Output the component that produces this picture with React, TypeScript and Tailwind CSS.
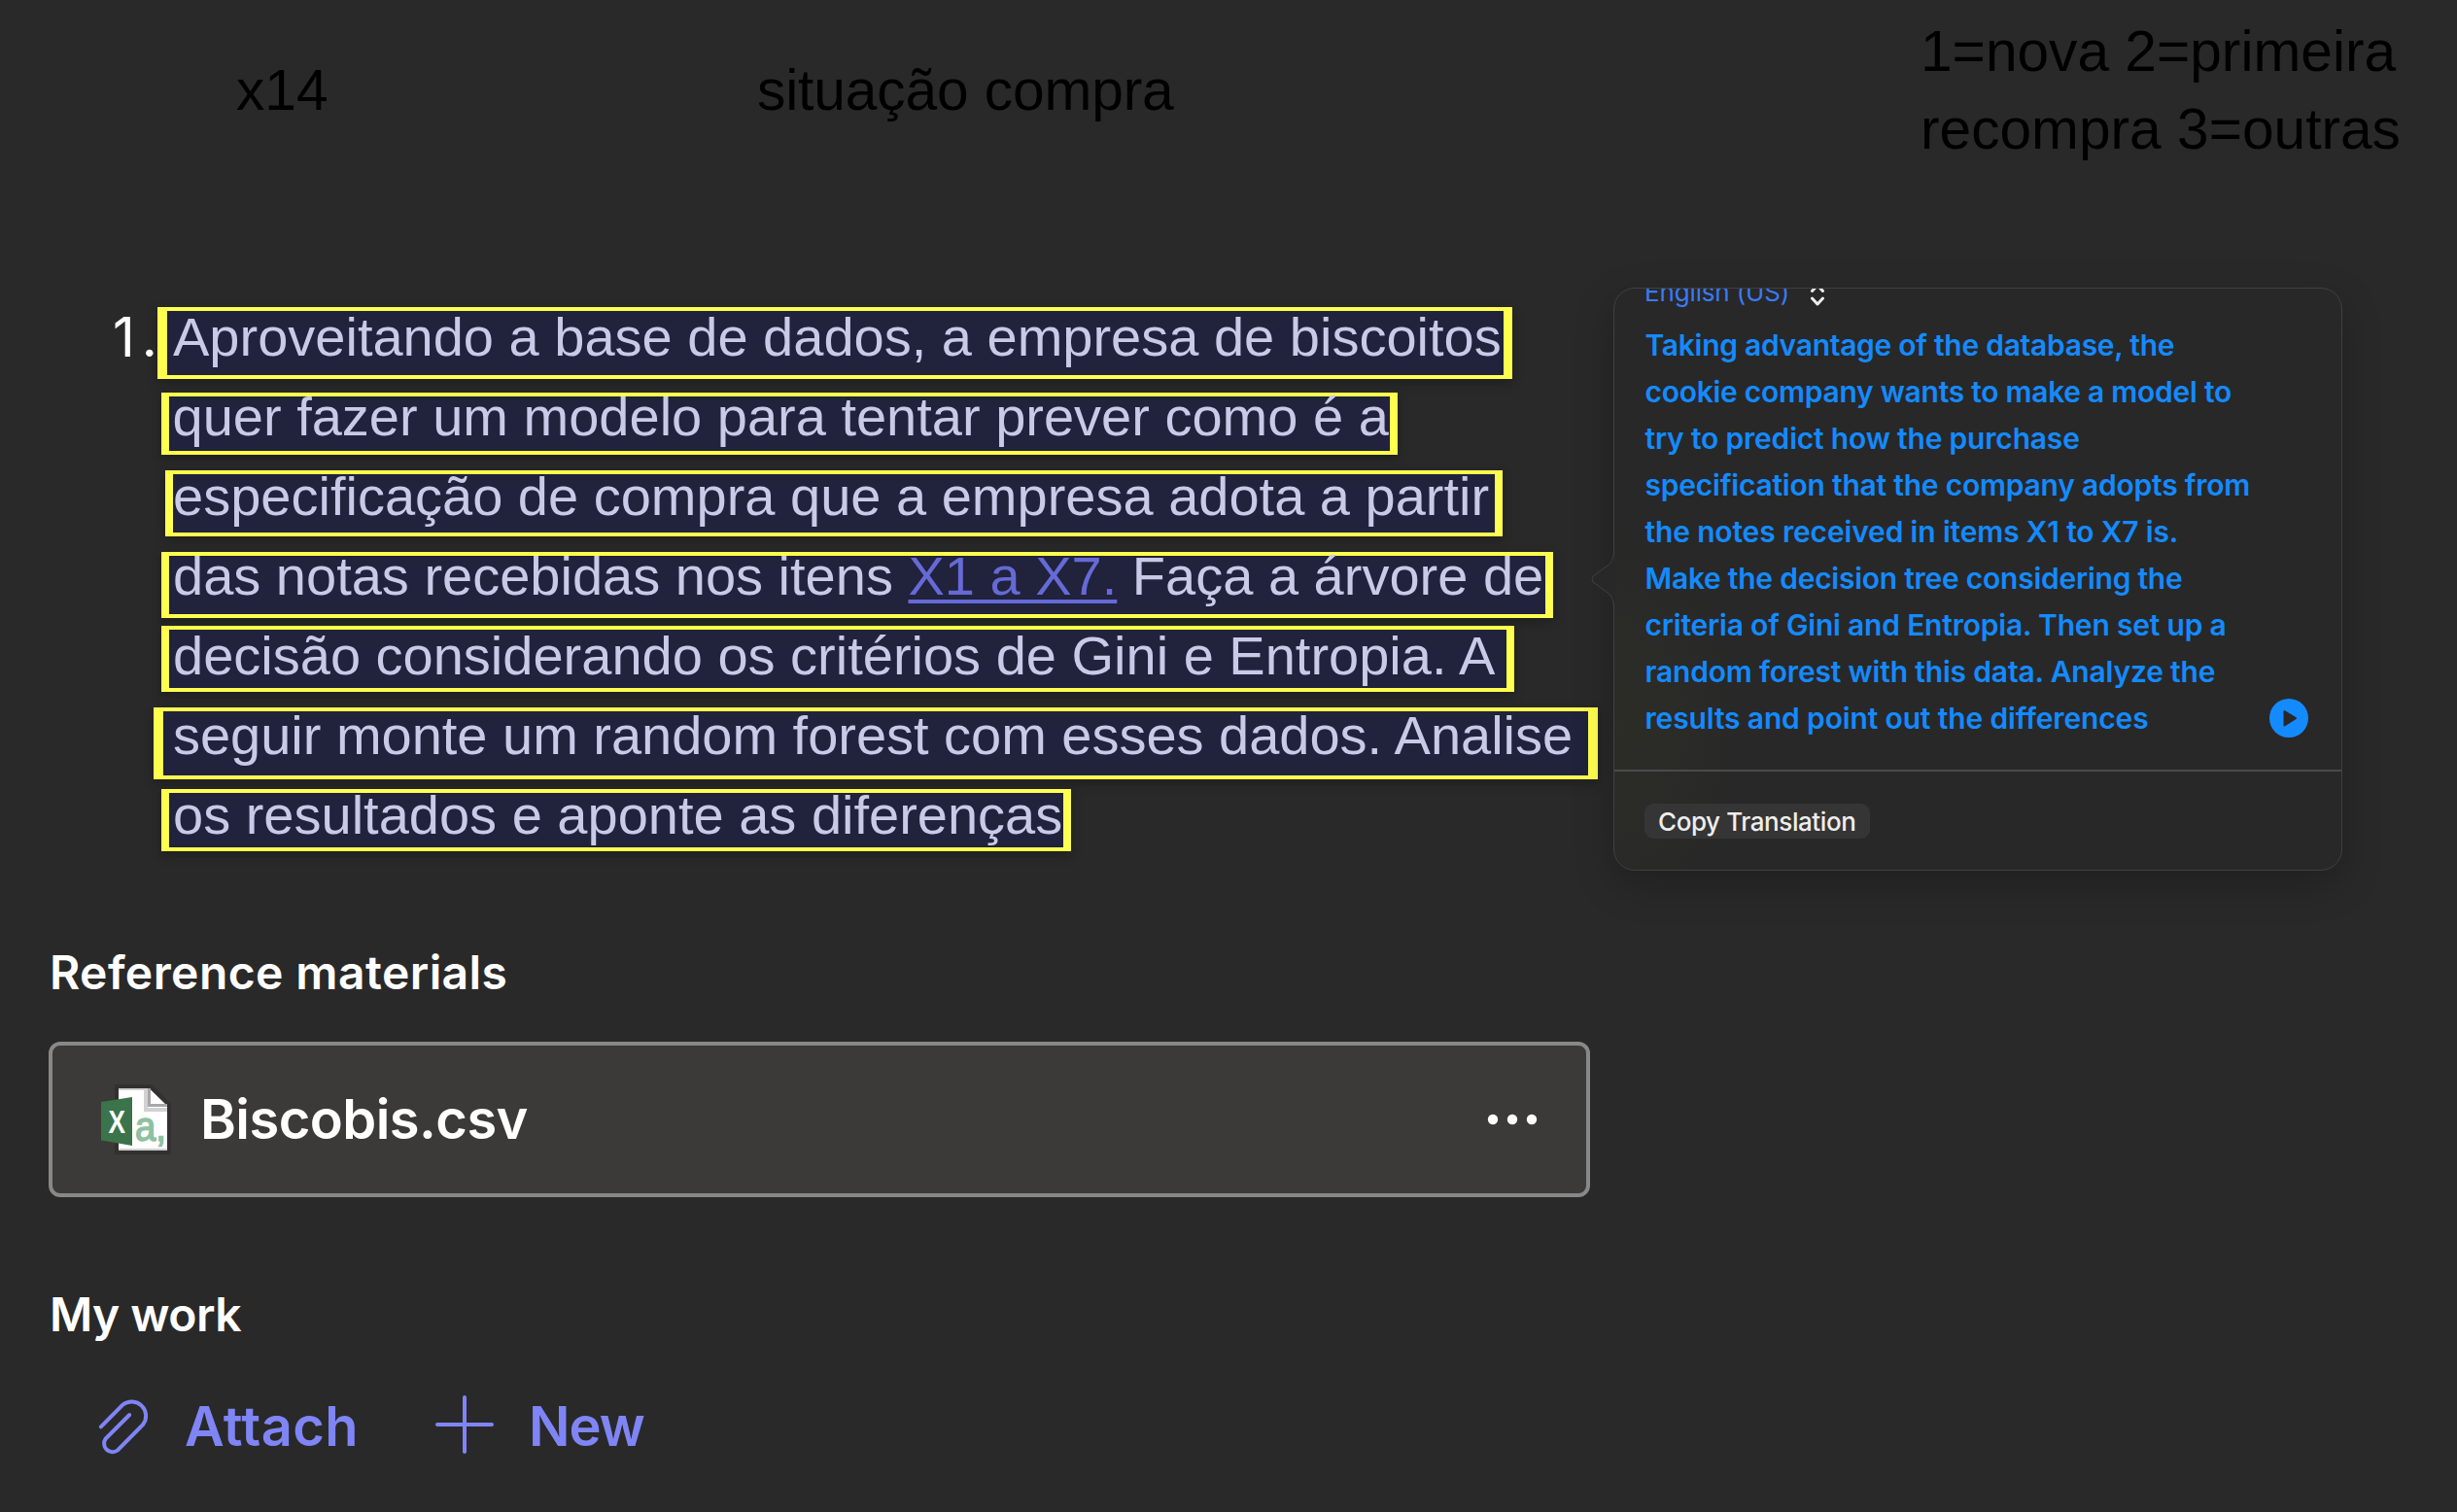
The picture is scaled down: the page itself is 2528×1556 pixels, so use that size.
import React from "react";

/* Selected source lines, each one outlined by its own detection frame. */
const sourceLines: { text: React.ReactNode; box: string }[] = [
  {
    text: "Aproveitando a base de dados, a empresa de biscoitos",
    box: "ml-1 h-[74px] w-[1394px] border-l-[10px] border-r-[9px] pl-1.5 pt-[7px]",
  },
  {
    text: "quer fazer um modelo para tentar prever como é a",
    box: "ml-2 mt-3.5 h-16 w-[1272px] border-x-8 pl-[3.5px] pt-px",
  },
  {
    text: "especificação de compra que a empresa adota a partir",
    box: "ml-3 mt-4 h-[68px] w-[1376px] border-x-8 pt-[3px]",
  },
  {
    text: (
      <>
        das notas recebidas nos itens{" "}
        <a className="text-[#656ad6] underline decoration-4 underline-offset-[5px] [text-decoration-skip-ink:none]">
          X1 a X7.
        </a>{" "}
        Faça a árvore de
      </>
    ),
    box: "ml-2 mt-4 h-[68px] w-[1432px] border-x-8 pl-1 pt-px",
  },
  {
    text: "decisão considerando os critérios de Gini e Entropia. A",
    box: "ml-2 mt-2 h-[68px] w-[1392px] border-x-8 pl-1 pt-[7px]",
  },
  {
    text: "seguir monte um random forest com esses dados. Analise",
    box: "mt-4 h-[74px] w-[1486px] border-x-[10px] pl-2.5 pt-[5px] tracking-[-0.02px]",
  },
  {
    text: "os resultados e aponte as diferenças",
    box: "ml-2 mt-2.5 h-16 w-[936px] border-x-8 pl-1 pt-[3px]",
  },
];

const translation = [
  { text: "Taking advantage of the database, the", cls: "tracking-[-0.28px]" },
  { text: "cookie company wants to make a model to", cls: "tracking-[-0.27px]" },
  { text: "try to predict how the purchase", cls: "tracking-[-0.19px]" },
  { text: "specification that the company adopts from", cls: "tracking-[-0.22px]" },
  { text: "the notes received in items X1 to X7 is.", cls: "tracking-[-0.16px]" },
  { text: "Make the decision tree considering the", cls: "tracking-[-0.25px]" },
  { text: "criteria of Gini and Entropia. Then set up a", cls: "tracking-[-0.2px]" },
  { text: "random forest with this data. Analyze the", cls: "tracking-[-0.18px]" },
  { text: "results and point out the differences", cls: "tracking-[-0.15px]" },
];

function CsvIcon() {
  return (
    <svg width="72" height="72" viewBox="0 0 72 72" className="shrink-0">
      <path d="M14 0H52L72 20V72H14Z" fill="#323031" />
      <path d="M18 4H49.5L68 22V68H18Z" fill="#fff" />
      <path d="M18 5H50M18 67H68" stroke="#d0d0d0" strokeWidth="2" />
      <path d="M46 4V26H68" fill="none" stroke="#d2d2d2" strokeWidth="4" />
      <path d="M49.5 4V21.5H68" fill="none" stroke="#a8a8a8" strokeWidth="3" />
      <text
        x="35"
        y="58"
        fontFamily="Liberation Sans"
        fontSize="42"
        fill="#8fc0a1"
        stroke="#8fc0a1"
        strokeWidth="1.500"
        textLength="32"
        lengthAdjust="spacingAndGlyphs"
      >
        a,
      </text>
      <path d="M0 18L32 13V63L0 57.5Z" fill="#3b734a" />
      <text
        x="7.5"
        y="50"
        fontFamily="Liberation Sans"
        fontSize="33"
        fontWeight="700"
        fill="#fff"
        textLength="17.5"
        lengthAdjust="spacingAndGlyphs"
      >
        X
      </text>
    </svg>
  );
}

function ClipIcon() {
  return (
    <svg width="60" height="64" viewBox="0 0 60 64" fill="none" stroke="currentColor" strokeWidth="4" strokeLinecap="round" className="shrink-0">
      <path d="M3.3 32.3L25.9 9.5A14.7 14.7 0 0 1 46.7 29.9L20.5 56.5A8.7 8.7 0 0 1 8.2 44.5L32.7 20" transform="translate(0.5 0)" />
    </svg>
  );
}

function PlusIcon() {
  return (
    <svg width="60" height="60" viewBox="0 0 60 60" stroke="currentColor" strokeWidth="4" strokeLinecap="round" className="shrink-0">
      <path d="M30 2V58M2 30H58" />
    </svg>
  );
}

function TranslationPopover() {
  return (
    <div className="absolute left-[1660px] top-[296px] h-[600px] w-[750px] rounded-[22px] border border-[#404040] bg-[#282828] bg-[radial-gradient(ellipse_130px_200px_at_0px_450px,#2d2d27,#282828)] font-[Inter,sans-serif] shadow-[0_14px_40px_rgba(0,0,0,0.22)]">
      <svg className="absolute -left-[25px] top-[268px]" width="26" height="62" viewBox="0 0 26 62">
        <path
          d="M25 1C25 8 23 12 19.500 16L3.500 27.500Q0.500 31 3.500 34.500L19.500 46C23 50 25 54 25 61H26V1Z"
          fill="#282828"
        />
        <path
          d="M24.500 1C24.500 8 23 12 19.500 16L3 28Q1 31 3 34L19.500 46C23 50 24.500 54 24.500 61"
          fill="none"
          stroke="#404040"
        />
      </svg>

      {/* The language picker is scrolled partly under the popover's top edge. */}
      <div className="flex h-[34px] gap-[21px] overflow-hidden pl-[31px]">
        <span className="-mt-3 whitespace-nowrap text-[26px] leading-8 tracking-[-0.15px] text-[#3a7af5]">English (US)</span>
        <svg className="-mt-1.5" width="16" height="26" viewBox="0 0 16 26" fill="none" stroke="#eee" strokeWidth="3" strokeLinecap="round" strokeLinejoin="round">
          <path d="M2.500 8.500L8 2.500L13.500 8.500M2.500 16L8 22L13.500 16" />
        </svg>
      </div>

      <div className="flex items-end justify-between pl-[31.5px] pr-[34px]">
        <div className="text-[30px] font-semibold leading-[48px] text-[#148aff]">
          {translation.map((l) => (
            <div key={l.text} className={`whitespace-nowrap ${l.cls}`}>
              {l.text}
            </div>
          ))}
        </div>
        <button className="mb-1 flex size-10 items-center justify-center rounded-full bg-[#148aff]">
          <svg width="40" height="40" viewBox="0 0 40 40" fill="#282828" stroke="#282828" strokeWidth="2" strokeLinejoin="round">
            <path d="M15.500 13V27.500L27 20.200Z" />
          </svg>
        </button>
      </div>

      <div className="mt-[29px] h-0.5 bg-[#4b4b4a]" />
      <button className="ml-[31px] mt-[33px] h-9 w-[232px] rounded-[9px] bg-[#353535] pl-3.5 pt-px text-left text-[26px] font-medium leading-[35px] tracking-[-0.42px] text-[#eee]">
        Copy Translation
      </button>
    </div>
  );
}

export default function App() {
  return (
    <main className="relative h-[1556px] w-[2528px] overflow-hidden bg-[#292929] text-white">
      <header className="grid h-[316px] grid-cols-[536px_1197px_1fr] items-start whitespace-nowrap pl-[243px] pt-[12.5px] font-['Liberation_Sans',sans-serif] text-[58.67px] leading-[80px] text-black">
        <div className="pt-10">x14</div>
        <div className="pt-10 tracking-[-0.12px]">situação compra</div>
        <div>
          1=nova 2=primeira
          <br />
          recompra 3=outras
        </div>
      </header>

      <section className="flex h-[560px] font-['Liberation_Sans',sans-serif] text-[56px] leading-10">
        <div className="w-[158px] shrink-0 whitespace-nowrap pl-[116px] pt-[11px] font-[Inter,sans-serif] tracking-[7px]">1.</div>
        <div>
          {sourceLines.map((l, i) => (
            <div
              key={i}
              className={`whitespace-nowrap border-y-4 border-[#ffff4f] bg-[#21223b] text-[#c8cae6] shadow-[0_4px_10px_rgba(0,0,0,0.25)] ${l.box}`}
            >
              {l.text}
            </div>
          ))}
        </div>
      </section>

      <section className="pl-[50px] pt-24 font-[Inter,sans-serif]">
        <h2 className="pl-px text-5xl font-semibold leading-[58px] tracking-[0.42px]">Reference materials</h2>
        <div className="mt-[42px] flex h-40 w-[1586px] items-center rounded-xl border-4 border-[#888] bg-[#3b3a38] pl-[50px] pr-[46px]">
          <CsvIcon />
          <span className="ml-[30px] text-[56px] font-semibold leading-[68px] tracking-[-0.55px]">Biscobis.csv</span>
          <svg className="ml-auto" width="60" height="12" viewBox="0 0 60 12" fill="#fff">
            <circle cx="10" cy="6" r="5.200" />
            <circle cx="30" cy="6" r="5.200" />
            <circle cx="50" cy="6" r="5.200" />
          </svg>
        </div>
      </section>

      <section className="pl-[50px] pt-[92px] font-[Inter,sans-serif]">
        <h2 className="pl-px text-5xl font-semibold leading-[58px] tracking-[-0.55px]">My work</h2>
        <div className="mt-[52px] flex pl-[50px] text-[56px] font-semibold leading-[68px] text-[#7f85f5]">
          <button className="flex w-[348px] items-start">
            <span className="mt-0.5">
              <ClipIcon />
            </span>
            <span className="ml-[30px] tracking-[0.4px]">Attach</span>
          </button>
          <button className="flex items-start">
            <span className="mt-0.5">
              <PlusIcon />
            </span>
            <span className="ml-9 tracking-[-1px]">New</span>
          </button>
        </div>
      </section>

      <TranslationPopover />
    </main>
  );
}
